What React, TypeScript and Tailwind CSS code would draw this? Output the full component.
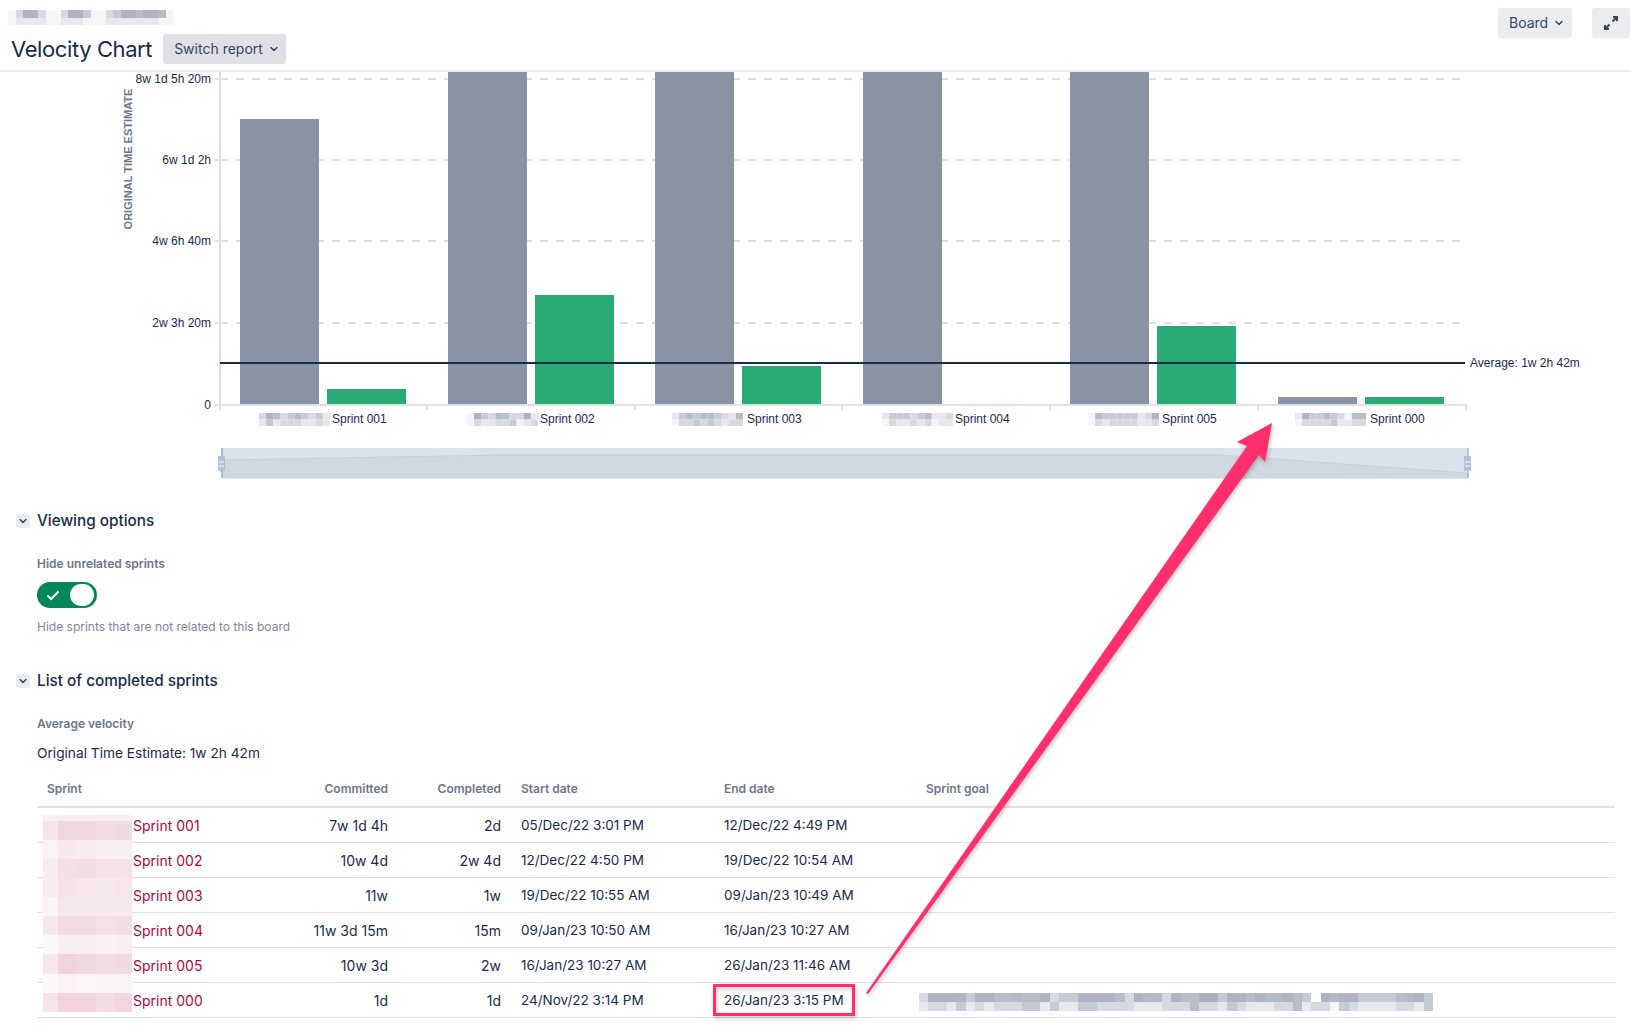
import { ChevronDown } from "lucide-react";

// chart data, all in page pixels
const bars = [
  { x: 240, grayTop: 119, greenTop: 389 },
  { x: 448, grayTop: 72, greenTop: 295 },
  { x: 655, grayTop: 72, greenTop: 366 },
  { x: 863, grayTop: 72, greenTop: 405 },
  { x: 1070, grayTop: 72, greenTop: 326 },
  { x: 1278, grayTop: 397, greenTop: 397 },
];

const yLabels = [
  { y: 79, text: "8w 1d 5h 20m" },
  { y: 160, text: "6w 1d 2h" },
  { y: 241, text: "4w 6h 40m" },
  { y: 323, text: "2w 3h 20m" },
];

const xLabels = [
  { blur: 259, text: "Sprint 001", at: 332, top: "3653454342", bottom: "2423332232" },
  { blur: 467, text: "Sprint 002", at: 540, top: "1643553362", bottom: "1322334123" },
  { blur: 672, text: "Sprint 003", at: 747, top: "2454554325", bottom: "1334343233" },
  { blur: 882, text: "Sprint 004", at: 955, top: "2444345223", bottom: "1322323122" },
  { blur: 1088, text: "Sprint 005", at: 1162, top: "1544444236", bottom: "1323333223" },
  { blur: 1295, text: "Sprint 000", at: 1370, top: "2644543155", bottom: "1333342233" },
];

const ticks = [220, 427, 635, 842, 1050, 1258, 1466];

const grays = ["#ffffff", "#f4f5f7", "#e6e8ed", "#d6d9e0", "#c6cad4", "#b8bdca", "#aeb4c3", "#b4bac8", "#abb1c1"];

const sprints = [
  { name: "Sprint 001", committed: "7w 1d 4h", completed: "2d", start: "05/Dec/22 3:01 PM", end: "12/Dec/22 4:49 PM" },
  { name: "Sprint 002", committed: "10w 4d", completed: "2w 4d", start: "12/Dec/22 4:50 PM", end: "19/Dec/22 10:54 AM" },
  { name: "Sprint 003", committed: "11w", completed: "1w", start: "19/Dec/22 10:55 AM", end: "09/Jan/23 10:49 AM" },
  { name: "Sprint 004", committed: "11w 3d 15m", completed: "15m", start: "09/Jan/23 10:50 AM", end: "16/Jan/23 10:27 AM" },
  { name: "Sprint 005", committed: "10w 3d", completed: "2w", start: "16/Jan/23 10:27 AM", end: "26/Jan/23 11:46 AM" },
  { name: "Sprint 000", committed: "1d", completed: "1d", start: "24/Nov/22 3:14 PM", end: "26/Jan/23 3:15 PM" },
];

const pinkRows = [
  { h: 6, c: ["#f9f1f4", "#f8eef2", "#f8eef2", "#f8eff3", "#f8eff3"] },
  { h: 19, c: ["#f6e4ea", "#f0d6df", "#f0d6df", "#f3dde4", "#f1dae2"] },
  { h: 19, c: ["#faf2f5", "#f7e9ee", "#f8ecf0", "#f8edf1", "#f8edf1"] },
  { h: 19, c: ["#f8ecf0", "#f4dfe6", "#f2dde4", "#f5e2e8", "#f5e1e7"] },
  { h: 19, c: ["#f8ecf0", "#f5e2e8", "#f6e6eb", "#f7e9ee", "#f6e6eb"] },
  { h: 19, c: ["#fbf4f6", "#f6e7ec", "#f6e7ec", "#f7e9ee", "#f7e9ee"] },
  { h: 19, c: ["#f6e7ec", "#f2dce4", "#f2dce4", "#f4e0e7", "#f2dde4"] },
  { h: 19, c: ["#fcf7f9", "#f9eff3", "#f9eff3", "#faf1f4", "#f9eff3"] },
  { h: 20, c: ["#f6e7ec", "#f0d3dc", "#f1d8e0", "#f3dde4", "#f2dae2"] },
  { h: 19, c: ["#fdf9fa", "#fbf2f5", "#fcf5f7", "#fbf4f6", "#fbf4f6"] },
  { h: 19, c: ["#f7e4ea", "#f0d3dc", "#f0d3dc", "#f3dce3", "#f1d6de"] },
];
const pinkCols = [15, 19, 19, 19, 17];

const goalTop = "3666646655755634466665367736558846656776540676644445764";
const goalBot = "2332423233344242244333322233353324322233523314322223324";
const crumbTop = "1366311366411346656671";
const crumbBot = "1222211222111222222211";

function Blur({ top, bottom, size }: { top: string; bottom: string; size: number }) {
  // pixelated strip left by the redaction in the screenshot
  return (
    <div className="flex flex-col">
      {[top, bottom].map((row, i) => (
        <div key={i} className="flex">
          {row.split("").map((level, j) => (
            <span key={j} style={{ width: size, height: size, background: grays[Number(level)] }} />
          ))}
        </div>
      ))}
    </div>
  );
}

function Chart() {
  return (
    <svg width="1631" height="418" viewBox="0 72 1631 418" className="block font-['Liberation_Sans',Arial,sans-serif]">
      {yLabels.map((l) => (
        <g key={l.y}>
          <line x1="215" x2="220" y1={l.y} y2={l.y} stroke="#dfe1e6" strokeWidth="2" />
          <line x1="220" x2="1460" y1={l.y} y2={l.y} stroke="#dfe1e6" strokeWidth="2" strokeDasharray="8 8" />
          <text x="211" y={l.y + 1} textAnchor="end" dominantBaseline="middle" fontSize="12" fill="#172b4d">
            {l.text}
          </text>
        </g>
      ))}
      <text x="211" y="406" textAnchor="end" dominantBaseline="middle" fontSize="12" fill="#172b4d">
        0
      </text>
      <text
        transform="translate(132 159) rotate(-90)"
        textAnchor="middle"
        fontSize="11"
        fontWeight="700"
        fill="#6b778c"
      >
        ORIGINAL TIME ESTIMATE
      </text>

      {bars.map((b) => (
        <g key={b.x}>
          <rect x={b.x} y={b.grayTop} width="79" height={405 - b.grayTop} fill="#8993a4" />
          <rect x={b.x + 87} y={b.greenTop} width="79" height={405 - b.greenTop} fill="#2aab75" />
        </g>
      ))}

      <line x1="220" x2="220" y1="72" y2="405" stroke="#dfe1e6" strokeWidth="2" />
      <line x1="215" x2="1467" y1="405" y2="405" stroke="#dfe1e6" strokeWidth="2" />
      {ticks.map((x) => (
        <line key={x} x1={x} x2={x} y1="405" y2="410" stroke="#dfe1e6" strokeWidth="2" />
      ))}

      <line x1="220" x2="1465" y1="363" y2="363" stroke="#172b4d" strokeWidth="2" />
      <text x="1470" y="364" dominantBaseline="middle" fontSize="12" fill="#172b4d">
        Average: 1w 2h 42m
      </text>

      {xLabels.map((l) => (
        <g key={l.text}>
          {l.top.split("").map((level, i) => (
            <rect key={i} x={l.blur + i * 7.1} y="413" width="7.1" height="6.5" fill={grays[Number(level)]} />
          ))}
          {l.bottom.split("").map((level, i) => (
            <rect key={i} x={l.blur + i * 7.1} y="419.5" width="7.1" height="6.5" fill={grays[Number(level)]} />
          ))}
          <text x={l.at} y="420" dominantBaseline="middle" fontSize="12" fill="#172b4d">
            {l.text}
          </text>
        </g>
      ))}

      {/* range slider under the chart */}
      <rect x="222" y="448" width="1246" height="30" fill="#dbe2ec" />
      <polygon points="222,460 500,455 1220,455 1468,473 1468,478 222,478" fill="#d0d8e2" stroke="#c6d0dc" />
      <line x1="222" x2="222" y1="448" y2="478" stroke="#a9b8cf" strokeWidth="2" />
      <line x1="1468" x2="1468" y1="448" y2="478" stroke="#a9b8cf" strokeWidth="1.5" />
      {[222, 1468].map((x) => (
        <g key={x}>
          <rect x={x - 4} y="456" width="7" height="15" rx="1" fill="#b3c1d6" />
          <line x1={x - 3} x2={x + 2} y1="462" y2="462" stroke="#ffffff" />
          <line x1={x - 3} x2={x + 2} y1="466" y2="466" stroke="#ffffff" />
        </g>
      ))}
    </svg>
  );
}

function SectionTitle({ title }: { title: string }) {
  return (
    <div className="flex items-center gap-[7px] pl-4">
      <span className="flex h-[14px] w-[14px] items-center justify-center rounded-[3px] bg-[#ebecf0]">
        <ChevronDown className="h-3 w-3 text-[#344563]" strokeWidth={3} />
      </span>
      <h2 className="text-[15.3px] leading-5 font-medium text-[#172b4d]">{title}</h2>
    </div>
  );
}

export default function App() {
  return (
    <div className="relative h-[1030px] w-full overflow-hidden bg-white font-[Inter,'Noto_Sans',sans-serif] text-[#172b4d]">
      <header className="flex h-[72px] justify-between border-b-2 border-[#ebecf0] pr-px">
        <div className="flex flex-col">
          <div className="mt-[10px] ml-2">
            <Blur top={crumbTop} bottom={crumbBot} size={7.5} />
          </div>
          <div className="mt-[9px] flex items-center gap-[11px] pl-[11px]">
            <h1 className="text-[22px] leading-[30px] font-normal tracking-[-0.4px]">Velocity Chart</h1>
            <button className="flex h-[30px] w-[123px] items-center gap-[5px] rounded-[3px] bg-[#dfe1e6] pl-[11px] text-sm text-[#344563]">
              Switch report
              <ChevronDown className="h-3 w-3" strokeWidth={3} />
            </button>
          </div>
        </div>
        <div className="mt-2 flex gap-5">
          <button className="flex h-[30px] w-[74px] items-center gap-[5px] rounded-[3px] bg-[#ebecf0] pl-[11px] text-sm text-[#344563]">
            Board
            <ChevronDown className="h-3 w-3" strokeWidth={3} />
          </button>
          <button className="flex h-[30px] w-[38px] items-center justify-center rounded-[3px] bg-[#ebecf0] text-[#344563]">
            <svg width="16" height="16" viewBox="0 0 16 16" fill="none" stroke="currentColor" strokeWidth="2">
              <path d="M10 2h4v4M14 2 9.500 6.500M2 10v4h4M2 14l4.500-4.500" />
            </svg>
          </button>
        </div>
      </header>

      <Chart />

      <section className="mt-[21px]">
        <SectionTitle title="Viewing options" />
        <div className="mt-[25px] pl-[37px] text-xs leading-4 font-semibold text-[#6b778c]">Hide unrelated sprints</div>
        <div className="mt-[10px] ml-[37px] flex h-[26px] w-[60px] items-center justify-between rounded-full bg-[#00875a] pr-[3px] pl-[9px]">
          <svg width="14" height="14" viewBox="0 0 14 14" fill="none" stroke="#ffffff" strokeWidth="2">
            <path d="M1.500 7.500 5.200 11 12.500 3.500" />
          </svg>
          <span className="h-[22px] w-[24px] rounded-full bg-white" />
        </div>
        <p className="mt-[11px] pl-[37px] text-xs leading-4 text-[#7a869a]">Hide sprints that are not related to this board</p>
      </section>

      <section className="mt-[36px]">
        <SectionTitle title="List of completed sprints" />
        <div className="mt-[25px] pl-[37px] text-xs leading-4 font-semibold text-[#6b778c]">Average velocity</div>
        <div className="mt-[11px] pl-[37px] text-[13.7px] leading-5">Original Time Estimate: 1w 2h 42m</div>

        <div className="relative mt-[8px] ml-[37px] w-[1578px]">
          <table className="w-full table-fixed border-collapse text-sm">
            <colgroup>
              <col className="w-[255px]" />
              <col className="w-[96px]" />
              <col className="w-[113px]" />
              <col className="w-[203px]" />
              <col className="w-[202px]" />
              <col />
            </colgroup>
            <thead>
              <tr className="h-[36px] border-b-2 border-[#dfe1e6] text-xs font-semibold text-[#6b778c]">
                <th className="pl-[10px] text-left font-semibold">Sprint</th>
                <th className="text-right font-semibold">Committed</th>
                <th className="text-right font-semibold">Completed</th>
                <th className="pl-[20px] text-left font-semibold">Start date</th>
                <th className="pl-[20px] text-left font-semibold">End date</th>
                <th className="pl-[20px] text-left font-semibold">Sprint goal</th>
              </tr>
            </thead>
            <tbody>
              {sprints.map((s, i) => (
                <tr key={s.name} className="h-[35px] border-b border-[#dfe1e6]">
                  <td className="pt-[2px] pl-[96px] text-[#b3063a]">{s.name}</td>
                  <td className="pt-[2px] text-right">{s.committed}</td>
                  <td className="pt-[2px] text-right">{s.completed}</td>
                  <td className="pt-[2px] pl-[20px] text-[13.5px]">{s.start}</td>
                  <td className="pt-[2px] pl-[20px] text-[13.5px]">{s.end}</td>
                  <td className="pt-[5px] pl-[13px]">
                    {i === sprints.length - 1 && <Blur top={goalTop} bottom={goalBot} size={9.35} />}
                  </td>
                </tr>
              ))}
            </tbody>
          </table>
          {/* redacted block that covers the first column */}
          <div className="absolute top-[44px] left-[6px] flex flex-col">
            {pinkRows.map((row, i) => (
              <div key={i} className="flex">
                {row.c.map((color, j) => (
                  <span key={j} style={{ width: pinkCols[j], height: row.h, background: color }} />
                ))}
              </div>
            ))}
          </div>
        </div>
      </section>

      {/* annotation drawn over the page */}
      <svg width="1631" height="1030" viewBox="0 0 1631 1030" className="pointer-events-none absolute top-0 left-0 drop-shadow-[1px_2px_2px_rgba(0,0,0,0.25)]">
        <polygon points="866,993 868,994 1259,455 1265,462 1272,423 1237,442 1247,446" fill="#ff2f6e" />
        <rect x="714.500" y="985.500" width="139" height="29" fill="none" stroke="#ff2f6e" strokeWidth="3" />
      </svg>
    </div>
  );
}
